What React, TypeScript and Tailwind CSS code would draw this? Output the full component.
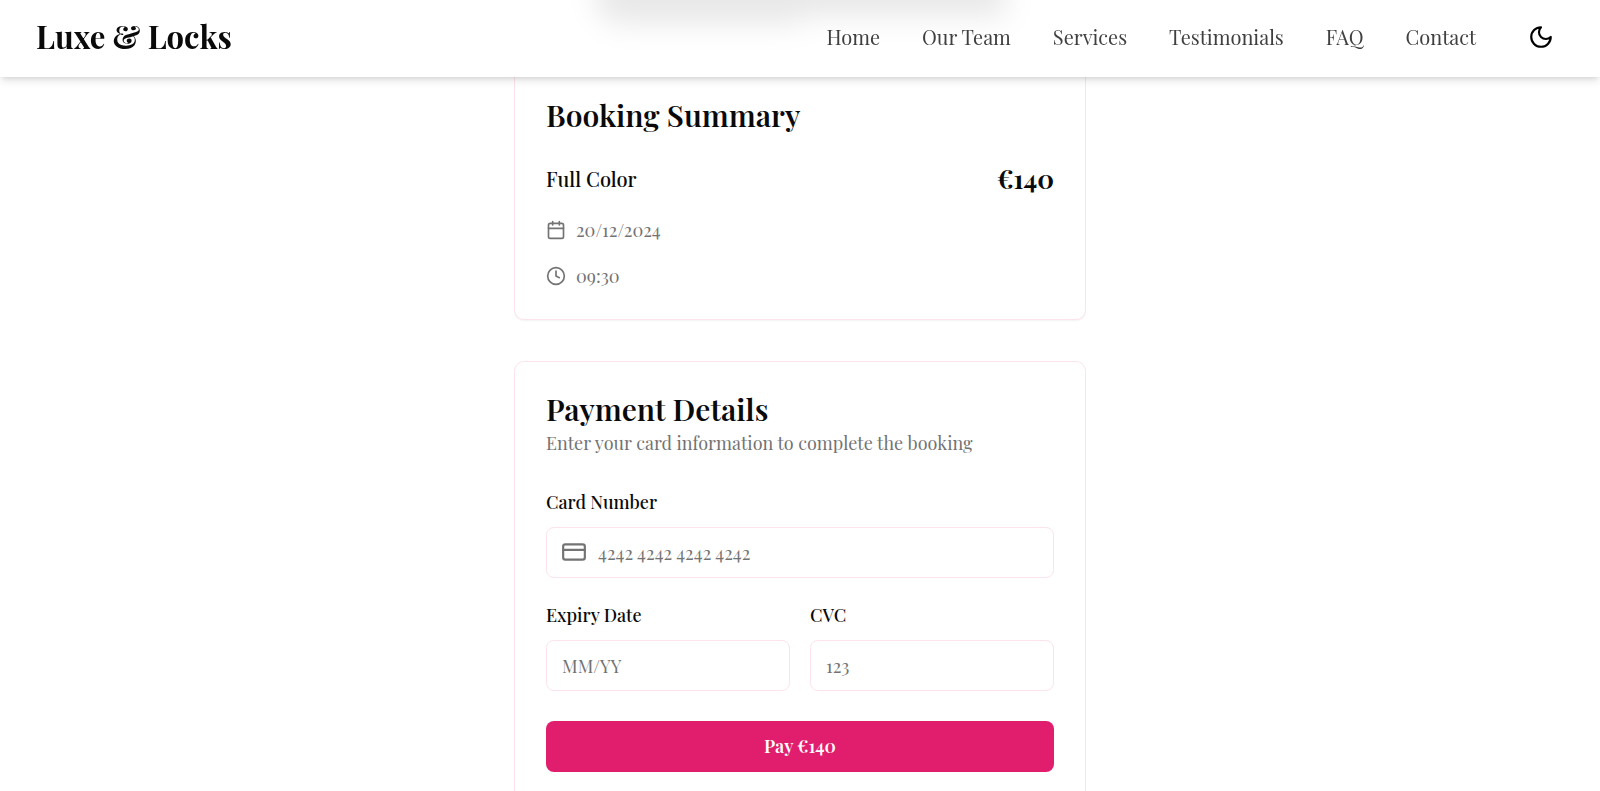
import { useState } from 'react'
import { Calendar, Clock, CreditCard } from 'lucide-react'

const navLinks = [
  { href: '#home', label: 'Home' },
  { href: '#team', label: 'Our Team' },
  { href: '#services', label: 'Services' },
  { href: '#testimonials', label: 'Testimonials' },
  { href: '#faq', label: 'FAQ' },
  { href: '#contact', label: 'Contact' },
]

const booking = {
  service: 'Full Color',
  price: 140,
  date: '20/12/2024',
  time: '09:30',
}

const cardClass = 'rounded-[10px] border border-[#fde4ea] bg-white px-[31px] py-[30px] shadow-xs'

const labelClass = 'block text-[18px] leading-[26px] font-medium text-[#0a0a0a]'

const inputClass =
  'block h-[51px] w-full rounded-lg border border-[#fde4ea] bg-white px-[15px] text-[18px] text-gray-900 placeholder:text-[#737373] focus:outline-none focus:ring-2 focus:ring-[#e11d6d]'

function MoonIcon() {
  return (
    <svg
      viewBox="0 0 24 24"
      className="size-[26px]"
      fill="none"
      stroke="currentColor"
      strokeWidth="2"
      strokeLinecap="round"
      strokeLinejoin="round"
      aria-hidden="true"
    >
      <path d="M12 3a6 6 0 0 0 9 9 9 9 0 1 1-9-9Z" />
    </svg>
  )
}

function Header() {
  return (
    <header className="fixed inset-x-0 top-0 z-10 bg-white shadow-[0_5px_8px_-1px_rgba(0,0,0,0.1),0_3px_5px_-2px_rgba(0,0,0,0.1)]">
      <div className="pointer-events-none absolute inset-0 overflow-hidden" aria-hidden="true">
        <div className="mx-auto -mt-8 flex h-14 w-[410px] blur-[14px]">
          <div className="h-14 flex-1 rounded-l-full bg-black/9" />
          <div className="h-12 flex-1 bg-black/9" />
        </div>
      </div>
      <div className="relative flex h-[77px] items-center justify-between px-9 pb-1">
        <a href="#home" className="text-[31px] font-bold text-[#0a0a0a]">
          Luxe &amp; Locks
        </a>
        <nav className="flex items-center gap-[42px]">
          {navLinks.map((link) => (
            <a key={link.href} href={link.href} className="text-[20px] text-[#404040] hover:text-black">
              {link.label}
            </a>
          ))}
          <button
            type="button"
            aria-label="Toggle theme"
            className="flex size-[46px] items-center justify-center rounded-lg text-black hover:bg-gray-100"
          >
            <MoonIcon />
          </button>
        </nav>
      </div>
    </header>
  )
}

function BookingSummary() {
  return (
    <section className={cardClass}>
      <h2 className="text-[30px] leading-[38px] font-semibold text-[#0a0a0a]">Booking Summary</h2>
      <div className="mt-[27px] flex items-center justify-between">
        <span className="text-[20px] leading-9 font-medium text-[#0a0a0a]">{booking.service}</span>
        <span className="text-[26px] leading-9 font-bold text-[#0a0a0a]">€{booking.price}</span>
      </div>
      <div className="mt-5 flex flex-col gap-5 text-[18px] leading-[26px] text-[#737373]">
        <div className="flex items-center gap-[10px]">
          <Calendar className="size-5" />
          <span>{booking.date}</span>
        </div>
        <div className="flex items-center gap-[10px]">
          <Clock className="size-5" />
          <span>{booking.time}</span>
        </div>
      </div>
    </section>
  )
}

function PaymentForm() {
  const [cardNumber, setCardNumber] = useState('')
  const [expiry, setExpiry] = useState('')
  const [cvc, setCvc] = useState('')

  return (
    <section className={cardClass}>
      <h2 className="text-[30px] leading-[34px] font-semibold text-[#0a0a0a]">Payment Details</h2>
      <p className="mt-1 text-[18px] leading-[26px] text-[#737373]">
        Enter your card information to complete the booking
      </p>

      <form className="mt-[33px]" onSubmit={(e) => e.preventDefault()}>
        <label htmlFor="card" className={labelClass}>
          Card Number
        </label>
        <div className="relative mt-3">
          <span className="absolute top-3 left-[15px] text-[#737373]">
            <CreditCard className="size-[26px]" />
          </span>
          <input
            id="card"
            type="text"
            value={cardNumber}
            onChange={(e) => setCardNumber(e.target.value)}
            placeholder="4242 4242 4242 4242"
            className={`${inputClass} pl-[51px]`}
          />
        </div>

        <div className="mt-6 grid grid-cols-2 gap-5">
          <div>
            <label htmlFor="expiry" className={labelClass}>
              Expiry Date
            </label>
            <div className="mt-3">
              <input
                id="expiry"
                type="text"
                value={expiry}
                onChange={(e) => setExpiry(e.target.value)}
                placeholder="MM/YY"
                className={inputClass}
              />
            </div>
          </div>
          <div>
            <label htmlFor="cvc" className={labelClass}>
              CVC
            </label>
            <div className="mt-3">
              <input
                id="cvc"
                type="text"
                value={cvc}
                onChange={(e) => setCvc(e.target.value)}
                placeholder="123"
                className={inputClass}
              />
            </div>
          </div>
        </div>

        <button
          type="submit"
          className="mt-[30px] h-[51px] w-full rounded-lg bg-[#e11d6d] text-[18px] font-semibold text-white hover:bg-[#c8175f]"
        >
          Pay €{booking.price}
        </button>
      </form>
    </section>
  )
}

export default function App() {
  return (
    <div className="min-h-screen bg-white font-['Playfair_Display','Liberation_Serif',serif]">
      <Header />
      <main className="mx-auto flex h-screen max-w-[572px] flex-col gap-[41px] overflow-hidden pt-[65px] *:shrink-0">
        <BookingSummary />
        <PaymentForm />
      </main>
    </div>
  )
}
